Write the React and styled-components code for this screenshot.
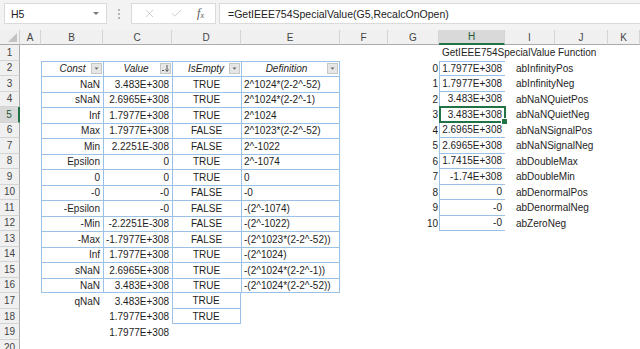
import React from "react";
import styled, { createGlobalStyle, css } from "styled-components";
import { X, Check } from "lucide-react";

const Global = createGlobalStyle`
  html, body { margin: 0; padding: 0; background: #fff; }
  body { font-family: "Liberation Sans", Arial, sans-serif; }
`;

const BLUE = "#9BC2E6";
const GREEN = "#217346";

const Frame = styled.div`
  width: 640px;
  height: 349px;
  overflow: hidden;
  background: #fff;
  display: flex;
  flex-direction: column;
`;

const Toolbar = styled.div`
  height: 30px;
  flex: none;
  display: flex;
  align-items: flex-start;
  padding: 3px 0 0 4px;
  box-sizing: border-box;
  background: #f3f3f3;
`;

const Box = styled.div`
  height: 21px;
  box-sizing: border-box;
  background: #fff;
  border: 1px solid #dadada;
  display: flex;
  align-items: center;
  font-size: 10.5px;
  color: #222;
`;

const NameBox = styled(Box)`
  width: 103px;
  padding: 0 6px;
  justify-content: space-between;
`;

const Caret = styled.span`
  width: 0;
  height: 0;
  border-left: 3px solid transparent;
  border-right: 3px solid transparent;
  border-top: 3px solid #7a7a7a;
  margin-right: 1px;
`;

const Grip = styled.div`
  width: 24px;
  height: 21px;
  display: flex;
  flex-direction: column;
  align-items: center;
  justify-content: center;
  gap: 2px;
  span {
    width: 2px;
    height: 2px;
    background: #b5b5b5;
  }
`;

const IconBox = styled(Box)`
  width: 85px;
  justify-content: space-around;
  padding: 0 4px;
  margin-right: 3px;
`;

const Fx = styled.span`
  font-family: "Liberation Serif", serif;
  font-style: italic;
  font-size: 12px;
  color: #555;
  sub {
    font-size: 8px;
    vertical-align: -1px;
  }
`;

const Formula = styled(Box)`
  flex: 1;
  padding-left: 8px;
  border-right: none;
`;

const Sheet = styled.div`
  display: grid;
  grid-template-columns: 20px 21px 62px 69px 69px 99px 48px 51px 66px 50px 53px 1fr;
  grid-template-rows: 15px repeat(20, 15.53px);
  font-size: 10px;
  color: #1e1e1e;
`;

const Corner = styled.div`
  background: #f0f0f0;
  border-right: 1px solid #d0d0d0;
  border-bottom: 1px solid #ababab;
  box-sizing: border-box;
  display: flex;
  align-items: flex-end;
  justify-content: flex-end;
  padding: 2px;
  &::after {
    content: "";
    width: 0;
    height: 0;
    border-left: 9px solid transparent;
    border-bottom: 9px solid #c3c3c3;
  }
`;

const ColHead = styled.div`
  background: ${(p) => (p.$sel ? "#d9d9d9" : "#f0f0f0")};
  color: ${(p) => (p.$sel ? "#1d5a37" : "#444")};
  border-right: 1px solid #d4d4d4;
  border-bottom: ${(p) => (p.$sel ? `2px solid ${GREEN}` : "1px solid #ababab")};
  box-sizing: border-box;
  display: flex;
  align-items: center;
  justify-content: center;
  font-size: 10px;
`;

const RowHead = styled.div`
  background: ${(p) => (p.$sel ? "#d9d9d9" : "#f0f0f0")};
  color: ${(p) => (p.$sel ? "#1d5a37" : "#444")};
  border-bottom: 1px solid #d4d4d4;
  border-right: ${(p) => (p.$sel ? `2px solid ${GREEN}` : "1px solid #ababab")};
  box-sizing: border-box;
  display: flex;
  align-items: center;
  justify-content: center;
  font-size: 10px;
`;

const Cell = styled.div`
  position: relative;
  box-sizing: border-box;
  display: flex;
  align-items: center;
  white-space: nowrap;
  justify-content: ${(p) =>
    p.$align === "right" ? "flex-end" : p.$align === "center" ? "center" : "flex-start"};
  padding: 0 ${(p) => p.$pr ?? 3}px 0 ${(p) => p.$pl ?? 2}px;
  border-top: ${(p) => (p.$bt ? `1px solid ${BLUE}` : "none")};
  border-left: ${(p) => (p.$bl ? `1px solid ${BLUE}` : "none")};
  border-right: ${(p) => (p.$br ? `1px solid ${BLUE}` : "none")};
  border-bottom: ${(p) => (p.$bb ? `1px solid ${BLUE}` : "none")};
  ${(p) =>
    p.$active &&
    css`
      &::after {
        content: "";
        position: absolute;
        left: -1px;
        top: -1px;
        right: -1px;
        bottom: -1px;
        border: 2px solid ${GREEN};
      }
      &::before {
        content: "";
        position: absolute;
        right: -3px;
        bottom: -3px;
        width: 5px;
        height: 5px;
        background: ${GREEN};
        border: 1px solid #fff;
        z-index: 2;
      }
    `}
`;

const HeadCell = styled(Cell)`
  font-style: italic;
  padding: 0 1px 0 2px;
`;

const HeadLabel = styled.span`
  flex: 1;
  text-align: center;
  padding-left: ${(p) => p.$shift || 0}px;
`;

const FilterBtn = styled.span`
  width: 11px;
  height: 11px;
  box-sizing: border-box;
  background: #e6e6e6;
  border: 1px solid #c6c6c6;
  display: flex;
  align-items: center;
  justify-content: center;
`;

function FilterIcon({ sorted }) {
  return (
    <FilterBtn>
      <svg width="9" height="9" viewBox="0 0 9 9">
        {sorted ? (
          <>
            <path d="M1 6.5h2" stroke="#555" strokeWidth="1" />
            <path d="M6 1v6M4.5 5.5L6 7.5l1.5-2" stroke="#555" strokeWidth="1" fill="none" />
          </>
        ) : (
          <path d="M2.5 3.5h4l-2 2.2z" fill="#666" />
        )}
      </svg>
    </FilterBtn>
  );
}

const table = [
  ["NaN", "3.483E+308", "TRUE", "2^1024*(2-2^-52)"],
  ["sNaN", "2.6965E+308", "TRUE", "2^1024*(2-2^-1)"],
  ["Inf", "1.7977E+308", "TRUE", "2^1024"],
  ["Max", "1.7977E+308", "FALSE", "2^1023*(2-2^-52)"],
  ["Min", "2.2251E-308", "FALSE", "2^-1022"],
  ["Epsilon", "0", "TRUE", "2^-1074"],
  ["0", "0", "TRUE", "0"],
  ["-0", "-0", "FALSE", "-0"],
  ["-Epsilon", "-0", "FALSE", "-(2^-1074)"],
  ["-Min", "-2.2251E-308", "FALSE", "-(2^-1022)"],
  ["-Max", "-1.7977E+308", "FALSE", "-(2^1023*(2-2^-52))"],
  ["Inf", "1.7977E+308", "TRUE", "-(2^1024)"],
  ["sNaN", "2.6965E+308", "TRUE", "-(2^1024*(2-2^-1))"],
  ["NaN", "3.483E+308", "TRUE", "-(2^1024*(2-2^-52))"],
];

const special = [
  ["1.7977E+308", "abInfinityPos"],
  ["1.7977E+308", "abInfinityNeg"],
  ["3.483E+308", "abNaNQuietPos"],
  ["3.483E+308", "abNaNQuietNeg"],
  ["2.6965E+308", "abNaNSignalPos"],
  ["2.6965E+308", "abNaNSignalNeg"],
  ["1.7415E+308", "abDoubleMax"],
  ["-1.74E+308", "abDoubleMin"],
  ["0", "abDenormalPos"],
  ["-0", "abDenormalNeg"],
  ["-0", "abZeroNeg"],
];

const COLS = ["A", "B", "C", "D", "E", "F", "G", "H", "I", "J", "K"];

function cellFor(r, c) {
  // r: 1-based row, c: 0-based column index into COLS
  const k = `${r}-${c}`;
  // Table header row 2
  if (r === 2 && c >= 1 && c <= 4) {
    const labels = ["Const", "Value", "IsEmpty", "Definition"];
    const shift = [10, 6, 8, 2][c - 1];
    return (
      <HeadCell key={k} $bt $bl $br={c === 4}>
        <HeadLabel $shift={shift}>{labels[c - 1]}</HeadLabel>
        <FilterIcon sorted={c === 2} />
      </HeadCell>
    );
  }
  if (r >= 3 && r <= 16 && c >= 1 && c <= 4) {
    const v = table[r - 3][c - 1];
    const align = c === 3 ? "center" : c === 4 ? "left" : "right";
    return (
      <Cell key={k} $align={align} $bt $bl $br={c === 4} $bb={r === 16}>
        {v}
      </Cell>
    );
  }
  if (r >= 17 && r <= 18 && c === 3) {
    return (
      <Cell key={k} $align="center" $bl $br $bb>
        TRUE
      </Cell>
    );
  }
  if (r === 17 && c === 1) return <Cell key={k} $align="right">qNaN</Cell>;
  if (r === 17 && c === 2) return <Cell key={k} $align="right">3.483E+308</Cell>;
  if ((r === 18 || r === 19) && c === 2)
    return <Cell key={k} $align="right">1.7977E+308</Cell>;
  if (r === 1 && c === 7)
    return <Cell key={k} $pl={3}>GetIEEE754SpecialValue Function</Cell>;
  if (r >= 2 && r <= 12) {
    const i = r - 2;
    if (c === 6) return <Cell key={k} $align="right" $pr={1}>{i}</Cell>;
    if (c === 7)
      return (
        <Cell key={k} $align="right" $bl $bt={r === 2} $bb $active={r === 5}>
          {special[i][0]}
        </Cell>
      );
    if (c === 8) return <Cell key={k} $pl={11}>{special[i][1]}</Cell>;
  }
  return <Cell key={k} />;
}

export default function App() {
  const rows = [];
  for (let r = 1; r <= 20; r++) {
    rows.push(<RowHead key={`rh-${r}`} $sel={r === 5}>{r}</RowHead>);
    for (let c = 0; c < COLS.length; c++) rows.push(cellFor(r, c));
  }
  return (
    <Frame>
      <Global />
      <Toolbar>
        <NameBox>
          <span>H5</span>
          <Caret />
        </NameBox>
        <Grip>
          <span />
          <span />
          <span />
        </Grip>
        <IconBox>
          <X size={13} strokeWidth={1.3} color="#bcbcbc" />
          <Check size={13} strokeWidth={1.3} color="#bcbcbc" />
          <Fx>
            f<sub>x</sub>
          </Fx>
        </IconBox>
        <Formula>=GetIEEE754SpecialValue(G5,RecalcOnOpen)</Formula>
      </Toolbar>
      <Sheet>
        <Corner />
        {COLS.map((l) => (
          <ColHead key={l} $sel={l === "H"}>
            {l}
          </ColHead>
        ))}
        {rows}
      </Sheet>
    </Frame>
  );
}
